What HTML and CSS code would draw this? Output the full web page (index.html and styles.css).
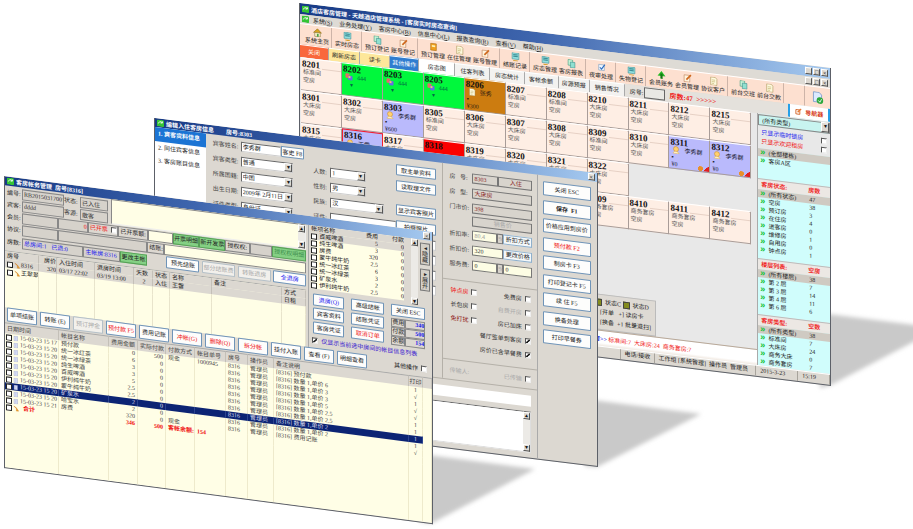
FILE: index.html
```html
<!DOCTYPE html>
<html lang="zh-CN">
<head>
<meta charset="utf-8">
<title>天越酒店管理系统</title>
<link rel="stylesheet" href="styles.css">
</head>
<body>
<svg class="defs" aria-hidden="true">
  <symbol id="i-home" viewBox="0 0 16 16"><path d="M1 8 8 1l7 7z" fill="#d9a520" stroke="#8a6a10"/><path d="M3 8h10v7H3z" fill="#f6efc8" stroke="#8a7a40"/><path d="M7 10h3v5H7z" fill="#49a349"/></symbol>
  <symbol id="i-screen" viewBox="0 0 16 16"><rect x="2" y="1" width="12" height="11" fill="#8fdede" stroke="#3f8f96"/><path d="M4 4h8M4 7h8" stroke="#3f8f96" stroke-width="2"/><path d="M4 15h8" stroke="#d8a030" stroke-width="2"/></symbol>
  <symbol id="i-doc" viewBox="0 0 16 16"><path d="M3 1h8l3 3v11H3z" fill="#fffbe0" stroke="#a89050"/><path d="M5 6h6M5 9h6M5 12h4" stroke="#b8a860"/></symbol>
  <symbol id="i-edit" viewBox="0 0 16 16"><path d="M2 3h10v12H2z" fill="#fff4df" stroke="#b87a50"/><path d="m6 11 8-9" stroke="#cf6a20" stroke-width="3"/></symbol>
  <symbol id="i-book" viewBox="0 0 16 16"><path d="M3 2h10v12H3z" fill="#f0a020" stroke="#a8640c"/><path d="M5 5h6v3H5z" fill="#fff0b0"/></symbol>
  <symbol id="i-pages" viewBox="0 0 16 16"><path d="M2 1h8v10H2z" fill="#c8f4d8" stroke="#3a9a7a"/><path d="M6 5h8v10H6z" fill="#8fe0d0" stroke="#3a8a8a"/></symbol>
  <symbol id="i-tree" viewBox="0 0 16 16"><path d="M8 1 15 10H1z" fill="#22b822"/><path d="M8 6v9" stroke="#147814" stroke-width="4"/></symbol>
  <symbol id="i-check" viewBox="0 0 16 16"><path d="M3 3h10v10H3z" fill="#eef6ff" stroke="#7898b8"/><path d="m5 8 3 3 6-9" fill="none" stroke="#2c6cc0" stroke-width="2"/></symbol>
  <symbol id="i-refresh" viewBox="0 0 16 16"><path d="M3 1h7l3 3v9H3z" fill="#dceaff" stroke="#7798c8"/><circle cx="11" cy="11" r="4" fill="#2ca83c"/><path d="m9 11 2 2 2-4" fill="none" stroke="#fff"/></symbol>
  <symbol id="i-person" viewBox="0 0 16 16"><circle cx="8" cy="6" r="5" fill="#ffd070" stroke="#c88a20"/><path d="M2 15c1-6 11-6 12 0z" fill="#fff0c0" stroke="#d8a850"/></symbol>
  <symbol id="i-group" viewBox="0 0 16 16"><rect x="1" y="1" width="8" height="9" rx="2" fill="#e86868"/><rect x="6" y="5" width="9" height="9" rx="2" fill="#6868e8"/><rect x="7" y="6" width="4" height="4" fill="#f4c860"/></symbol>
  <symbol id="i-app" viewBox="0 0 16 16"><rect width="16" height="16" rx="2" fill="#35c435"/><path d="M3 9c2-6 8-6 9-2M12 3v4H8" fill="none" stroke="#fff" stroke-width="2"/></symbol>
  <symbol id="i-pen" viewBox="0 0 16 16"><path d="M2 4h9v10H2z" fill="#fff" stroke="#d06020" stroke-width="2"/><path d="m6 10 8-9" stroke="#e87830" stroke-width="3"/></symbol>
  <symbol id="i-file" viewBox="0 0 12 16"><path d="M1 2h9v12H1z" fill="#eef2ff" stroke="#7a88c0"/><path d="M3 5h5M3 8h5M3 11h5" stroke="#8a98d0"/></symbol>
  <symbol id="i-key" viewBox="0 0 16 16"><path d="M2 2 9 8v7l6-1-6-8z" fill="#f0a830" stroke="#c86a10"/></symbol>
</svg>
<main class="desktop">
  <svg class="shadows" viewBox="0 0 913 529" aria-hidden="true">
    <defs><filter id="soft" x="-10%" y="-10%" width="120%" height="120%"><feGaussianBlur stdDeviation="2"/></filter></defs>
    <g fill="#c9c9c9" filter="url(#soft)">
      <path d="M820 313 940 328 831 385 820 388z"/>
      <path d="M585 399 701 414 597 467 585 466z"/>
      <path d="M420 454 535 469 432 523 420 522z"/>
    </g>
  </svg>

  <section class="win win-rooms">
    <header class="title"><svg class="ic"><use href="#i-app"/></svg><h2>酒店客房管理 - 天越酒店管理系统 - [客房实时房态查询]</h2><span class="caps"><button aria-label="最小化">_</button><button aria-label="最大化">□</button><button aria-label="关闭">×</button></span></header>
    <nav class="menu"><svg class="ic"><use href="#i-app"/></svg><a href="#">系统(<u>S</u>)</a><a href="#">业务处理(<u>Y</u>)</a><a href="#">客房中心(<u>B</u>)</a><a href="#">信息中心(<u>L</u>)</a><a href="#">报表查询(<u>R</u>)</a><a href="#">查看(<u>V</u>)</a><a href="#">帮助(<u>H</u>)</a><span class="caps"><button aria-label="最小化窗口">_</button><button aria-label="还原窗口">□</button><button aria-label="关闭窗口">×</button></span></nav>
    <div class="tools">
      <div class="grp"><button><svg class="ic"><use href="#i-home"/></svg>系统主页</button></div>
      <div class="grp"><button><svg class="ic"><use href="#i-screen"/></svg>实时房态</button></div>
      <div class="grp"><button><svg class="ic"><use href="#i-pages"/></svg>预订登记</button><button><svg class="ic"><use href="#i-edit"/></svg>账号登记</button></div>
      <div class="grp"><button><svg class="ic"><use href="#i-book"/></svg>预订管理</button><button><svg class="ic"><use href="#i-doc"/></svg>在住管理</button><button><svg class="ic"><use href="#i-edit"/></svg>账号管理</button></div>
      <div class="grp"><button><svg class="ic"><use href="#i-screen"/></svg>结账记录</button></div>
      <div class="grp"><button><svg class="ic"><use href="#i-screen"/></svg>房态管理</button><button><svg class="ic"><use href="#i-pages"/></svg>客房报表</button></div>
      <div class="grp"><button><svg class="ic"><use href="#i-check"/></svg>夜审处理</button></div>
      <div class="grp"><button><svg class="ic"><use href="#i-screen"/></svg>失物登记</button></div>
      <div class="grp"><button><svg class="ic"><use href="#i-tree"/></svg>会员账务</button><button><svg class="ic"><use href="#i-edit"/></svg>会员管理</button><button><svg class="ic"><use href="#i-doc"/></svg>协议客户</button></div>
      <div class="grp"><button><svg class="ic"><use href="#i-pages"/></svg>前台交班</button><button><svg class="ic"><use href="#i-doc"/></svg>前台交款</button></div>
      <button class="big" aria-label="刷新"><svg class="ic"><use href="#i-refresh"/></svg></button>
    </div>
    <div class="tabs">
      <button class="t-close">关闭</button><button class="t-yel">刷新房态</button><button class="t-yel">读卡</button><button class="t-blue">其他操作</button><button class="t-on">房态图</button><button>住客列表</button><button>房态统计</button><button>客帐余额</button><button>房源预报</button><button>销售情况</button>
      <div class="find"><label for="roomno">房号:</label><input id="roomno"><strong>房数:47&nbsp; &gt;&gt;&gt;&gt;&gt;</strong></div>
      <h3 class="guide"><svg class="ic"><use href="#i-pen"/></svg>导航器</h3>
    </div>
    <div class="rooms-body">
      <div class="rooms-main">
        <div class="cards">
          <article><b>8201</b><p>标准间</p><p>空房</p></article>
          <article class="green"><b>8202</b><p><svg class="ic"><use href="#i-group"/></svg>444</p><p class="mark">▾</p></article>
          <article class="green"><b>8203</b><p><svg class="ic"><use href="#i-group"/></svg>444</p><p class="mark">▾</p></article>
          <article class="green"><b>8205</b><p><svg class="ic"><use href="#i-group"/></svg>444</p><p class="mark">▾</p></article>
          <article class="brown"><b>8206</b><p><svg class="ic"><use href="#i-doc"/></svg>张秀</p><p>▪</p><p>¥300</p></article>
          <article><b>8207</b><p>标准间</p><p>空房</p></article>
          <article><b>8208</b><p>标准间</p><p>空房</p></article>
          <article><b>8210</b><p>大床房</p><p>空房</p></article>
          <article><b>8211</b><p>大床房</p><p>空房</p></article>
          <article><b>8212</b><p>大床房</p><p>空房</p></article>
          <article><b>8215</b><p>大床房</p><p>空房</p></article>
          <article><b>8301</b><p>大床房</p><p>空房</p></article>
          <article><b>8302</b><p>大床房</p><p>空房</p></article>
          <article class="lilac"><b>8303</b><p><svg class="ic"><use href="#i-person"/></svg>李秀群</p><p>▪</p><p>¥600</p></article>
          <article><b>8305</b><p>标准间</p><p>空房</p></article>
          <article><b>8306</b><p>大床房</p><p>空房</p></article>
          <article><b>8307</b><p>大床房</p><p>空房</p></article>
          <article><b>8308</b><p>大床房</p><p>空房</p></article>
          <article><b>8309</b><p>标准间</p><p>空房</p></article>
          <article><b>8310</b><p>大床房</p><p>空房</p></article>
          <article class="lilac due"><b>8311</b><p><svg class="ic"><use href="#i-person"/></svg>李秀群</p><p>▪</p><p>¥0</p></article>
          <article class="lilac due"><b>8312</b><p><svg class="ic"><use href="#i-person"/></svg>李秀群</p><p>▪</p><p>¥0</p></article>
          <article><b>8315</b><p>大床房</p></article>
          <article class="lilac picked"><b>8316</b><p><svg class="ic"><use href="#i-person"/></svg>王雷</p></article>
          <article><b>8317</b><p>大床房</p></article>
          <article class="red"><b>8318</b></article>
          <article><b>8319</b><p>大床房</p></article>
          <article><b>8320</b><p>大床房</p></article>
          <article><b>8321</b><p>大床房</p></article>
          <article><b>8322</b><p>大床房</p><p>空房</p></article>
          <article class="none"></article><article class="none"></article><article class="none"></article>
          <article></article><article></article><article></article><article></article><article></article><article></article><article></article>
          <article><b>8409</b><p>商务套房</p><p>空房</p></article>
          <article><b>8410</b><p>商务套房</p><p>空房</p></article>
          <article><b>8411</b><p>商务套房</p><p>空房</p></article>
          <article><b>8412</b><p>商务套房</p><p>空房</p></article>
        </div>
        <div class="legend">
          <p><i></i>状态C <i></i>状态D</p>
          <p>[开单 &nbsp; +] 读房卡</p>
          <p>[换备 &nbsp;+1 批量退扫]</p>
        </div>
        <p class="ticker"><b>客房空房&gt;&gt;</b> 标准间:7&nbsp; 大床房:24&nbsp; 商务套房:7</p>
      </div>
      <aside class="side">
        <span class="drop"><select aria-label="类型"><option>(所有类型)</option></select></span>
        <div class="opts">
          <label class="blue">只显示临时锁房<input type="checkbox"></label>
          <label class="redt">只显示欢迎租房<input type="checkbox"></label>
        </div>
        <table class="areas"><tr class="on"><td>(全部楼栋)</td></tr><tr><td>客房A区</td></tr></table>
        <h4><span>客房状态:</span><span>房数</span></h4>
        <table><tr class="on"><td>(所有状态)</td><td>47</td></tr><tr><td>空房</td><td>38</td></tr><tr><td>预订房</td><td>3</td></tr><tr><td>在住房</td><td>4</td></tr><tr><td>进客房</td><td>0</td></tr><tr><td>维修房</td><td>1</td></tr><tr><td>自用房</td><td>0</td></tr><tr><td>钟点房</td><td>1</td></tr></table>
        <h4><span>楼层列表:</span><span>空房</span></h4>
        <table><tr class="on"><td>(所有楼层)</td><td>38</td></tr><tr><td>第 2 层</td><td>7</td></tr><tr><td>第 3 层</td><td>14</td></tr><tr><td>第 4 层</td><td>11</td></tr><tr><td>第 6 层</td><td>6</td></tr></table>
        <h4><span>客房类型:</span><span>空数</span></h4>
        <table><tr class="on"><td>(所有类型)</td><td>38</td></tr><tr><td>标准间</td><td>7</td></tr><tr><td>大床房</td><td>24</td></tr><tr><td>商务大床</td><td>0</td></tr><tr><td>商务套房</td><td>7</td></tr></table>
      </aside>
    </div>
    <footer class="status"><span></span><span>电话/接收</span><span>工作组 [系统管理]&nbsp; 操作员&nbsp; 管理员</span><span>2015-3-23</span><span>15:19</span></footer>
  </section>

  <section class="win win-guest">
    <header class="title"><svg class="ic"><use href="#i-app"/></svg><h2>编辑入住客房信息 &nbsp; &nbsp; &nbsp; &nbsp;房号:8303</h2><span class="caps"><button aria-label="关闭">×</button></span></header>
    <div class="guest-body">
      <nav class="steps"><a class="on" href="#">1. 宾客资料信息</a><a href="#">2. 同住宾客信息</a><a href="#">3. 客房账目信息</a></nav>
      <div class="guest-main">
        <form class="guest-form">
          <div class="col-a">
            <div class="f"><label for="gn">宾客姓名:</label><span class="pair"><input id="gn" value="李秀群"><button type="button">客史 F8</button></span></div>
            <div class="f"><label for="gt">宾客类型:</label><span class="drop"><select id="gt"><option>普通</option></select></span></div>
            <div class="f"><label for="gc">所属国籍:</label><span class="drop"><select id="gc"><option>中国</option></select></span></div>
            <div class="f"><label for="gb">出生日期:</label><span class="drop"><select id="gb"><option>2009年 2月11日</option></select></span></div>
            <div class="f"><label for="gi">证件类型:</label><span class="drop"><select id="gi"><option>身份证</option></select></span></div>
          </div>
          <div class="col-b">
            <div class="f short"><label for="gp">人数:</label><span class="spin"><input id="gp" value="1"></span></div>
            <div class="f short"><label for="gs">性别:</label><span class="drop"><select id="gs"><option>男</option></select></span></div>
            <div class="f"><label for="gm">民族:</label><span class="drop"><select id="gm"><option>汉</option></select></span></div>
            <div class="f long"><label for="ga">证件:</label><input id="ga"></div>
          </div>
          <div class="col-c">
            <button type="button">取主单资料</button><button type="button">读取理文件</button><button type="button" class="gap">显示宾客照片</button><button type="button">拍摄照片</button>
            <input aria-label="电话"><input aria-label="邮编"><input aria-label="车牌"><input aria-label="单位">
          </div>
        </form>
        <form class="price">
          <div class="p"><label for="pr">房&nbsp;&nbsp; 号:</label><span class="pair"><input id="pr" value="8303"><output>入住</output></span></div>
          <div class="p"><label for="pt">房&nbsp;&nbsp; 型:</label><input id="pt" value="大床房"></div>
          <div class="p"><label for="pm">门市价:</label><input id="pm" value="398"></div>
          <div class="p low"><span></span><output class="dim">销售价</output></div>
          <div class="p c"><label for="pd">折扣率:</label><span class="trio"><input id="pd" class="pale" value="80.4"><i>%</i><button type="button">折扣方式</button></span></div>
          <div class="p c"><label for="pe">折扣价:</label><span class="pair2"><input id="pe" value="320"><button type="button">更改价格</button></span></div>
          <div class="p c"><label for="pf">服务费:</label><span class="trio"><input id="pf" value="0"><i>%</i><input aria-label="服务费金额" value="0"></span></div>
          <div class="checks">
            <label class="redt">钟点房<input type="checkbox"></label><label>免费房<input type="checkbox"></label>
            <label>长包房<input type="checkbox"></label><label class="off">自费开房<input type="checkbox"></label>
            <label class="maroon">免打扰<input type="checkbox"></label><label>房已加床<input type="checkbox"></label>
            <label class="wide">餐厅签单到客房<input type="checkbox" checked></label>
            <label class="wide">房价已含早餐费<input type="checkbox" checked></label>
          </div>
          <div class="sent"><span>传输人:</span><label>已传输<input type="checkbox"></label></div>
        </form>
        <div class="notes"><input aria-label="摘要"><div class="memo"><textarea aria-label="备注"></textarea><span class="bar"><i>▴</i><i>▾</i></span></div></div>
      </div>
      <div class="cmds"><button>关闭 ESC</button><button class="strong">保存&nbsp; F1</button><button>价格应用到房价</button><button class="redt">预付款 F2</button><button>制房卡 F3</button><button>打印登记卡 F5</button><button>续 住 F5</button><button>换备处理</button><button>打印早餐券</button></div>
    </div>
  </section>

  <section class="win win-bill">
    <header class="title"><svg class="ic"><use href="#i-app"/></svg><h2>客房帐务管理&nbsp; 房号[8316]</h2><span class="caps"><button aria-label="关闭">×</button></span></header>
    <div class="bill-top">
      <div class="bill-left">
        <div class="head">
          <div class="ids">
            <label for="b1">编号:</label><input id="b1" value="RB20150317001"><label for="b2">状态:</label><input id="b2" value="已入住">
            <label for="b3">宾客:</label><input id="b3" value="dddd"><label for="b4">客源:</label><input id="b4" value="散客">
          </div>
          <div class="pane"><span class="bar"><i>▴</i><i>▾</i></span></div>
        </div>
        <div class="line l1"><label for="b5">会员:</label><input id="b5"><output class="redt r">0</output><label class="box redt">已开票 <input type="checkbox"></label><span class="box">已开票额:</span><input class="cream" aria-label="已开票额"><button class="gb">开票明细</button><button class="gb">新开发票</button><span class="box">授权权:</span><input aria-label="授权权"><button class="gb dim">授权权明细</button></div>
        <div class="line l2"><label for="b6">协议:</label><input id="b6"><input aria-label="协议名称"><label class="box" for="b7">结账:</label><input id="b7" class="cream"></div>
        <div class="line l3"><span>房数:</span><output class="blue">总房间:1&nbsp; &nbsp;已退:0</output><output class="blue">主帐房:8316</output><button class="gb">更改主帐</button><span class="settle"><button class="btn">预先结账</button><button class="btn off">部分结账费</button><button class="btn off">转账退房</button><button class="btn blue">全退房</button></span></div>
        <table class="stay">
          <colgroup><col class="c1"><col class="c2"><col class="c3"><col class="c4"><col class="c5"><col class="c6"><col class="c7"><col class="c8"><col></colgroup>
          <tr class="h"><th>房号</th><th class="r">房价</th><th>入住时间</th><th>退房时间</th><th>天数</th><th>状态</th><th>名称</th><th>备注</th><th>方式</th></tr>
          <tr class="h"><td><input type="checkbox" aria-label="8316"><svg class="ic"><use href="#i-key"/></svg>8316</td><td class="r">320</td><td>03/17 22:02</td><td>03/19 13:00</td><td class="m">2</td><td>入住</td><td>王雷</td><td></td><td>日租</td></tr>
          <tr><td><input type="checkbox" aria-label="王翠翠"><svg class="ic"><use href="#i-key"/></svg>王翠翠</td><td></td><td></td><td></td><td></td><td></td><td></td><td></td><td></td></tr>
          <tr class="fill"><td></td><td></td><td></td><td></td><td></td><td></td><td></td><td></td><td></td></tr>
        </table>
      </div>
      <div class="bill-right">
        <div class="items">
          <table><tr class="h"><th>帐项名称</th><th class="r">费用</th><th class="r">付款</th></tr>
            <tr class="h"><td><label><input type="checkbox">百威啤酒</label></td><td>5</td><td>0</td></tr><tr><td><label><input type="checkbox">纯生啤酒</label></td><td>3</td><td>0</td></tr><tr><td><label><input type="checkbox">房费</label></td><td>320</td><td>0</td></tr><tr><td><label><input type="checkbox">蒙牛纯牛奶</label></td><td>2.5</td><td>0</td></tr><tr><td><label><input type="checkbox">统一冰红茶</label></td><td>6</td><td>0</td></tr><tr><td><label><input type="checkbox">统一冰绿茶</label></td><td>3</td><td>0</td></tr><tr><td><label><input type="checkbox">矿泉水</label></td><td>2</td><td>0</td></tr><tr><td><label><input type="checkbox">伊利纯牛奶</label></td><td>2.5</td><td>0</td></tr>
          </table>
          <span class="bar"><i>▴</i><i>▾</i></span>
          <div class="flip"><button>◂<br>隐<br>藏</button><button>▸<br>展<br>开</button></div>
        </div>
        <div class="acts">
          <button class="btn blue">退房(Q)</button><button class="btn">高级结帐</button><button class="btn">关闭 ESC</button>
          <button class="btn">宾客资料</button><button class="btn">结账凭证</button>
          <button class="btn">客房凭证</button><button class="btn redt">取消订单</button>
          <dl><dt>费用</dt><dd>340</dd><dt>付款</dt><dd>500</dd><dt>余额</dt><dd>154</dd></dl>
        </div>
        <label class="only"><input type="checkbox" checked>仅显示当前选中房间的帐目信息列表</label>
      </div>
    </div>
    <div class="btnrow"><button class="btn">单项结账</button><button class="btn">转账 (E)</button><button class="btn off">预订押金</button><button class="btn redt">预付款 F5</button><button class="btn">费用记账</button><button class="btn redt">冲帐(G)</button><button class="btn redt">删除(Q)</button><button class="btn redt">拆分帐</button><button class="btn">挂付入账</button><button class="btn">查看 (F)</button><button class="btn">明细查看</button><label>其他操作<input type="checkbox"></label></div>
    <table class="ledger">
      <colgroup><col class="d1"><col class="d2"><col class="d3"><col class="d4"><col class="d5"><col class="d6"><col class="d7"><col class="d8"><col class="d9"><col class="d10"><col></colgroup>
      <tr class="h"><th>日期时间</th><th>帐目名称</th><th class="r">费用金额</th><th class="r">实际付款</th><th>付款方式</th><th>帐目单号</th><th>房号</th><th>操作员</th><th>备注说明</th><th class="m">打印</th><th></th></tr>
      <tr><td><input type="checkbox" aria-label="1"><svg class="ic"><use href="#i-file"/></svg>15-03-23 15 17</td><td>预付款</td><td>0</td><td>500</td><td>现金</td><td>1000945</td><td>8316</td><td>管理员</td><td>[8316] 预付款</td><td>1</td><td></td></tr>
      <tr><td><input type="checkbox" aria-label="2"><svg class="ic"><use href="#i-file"/></svg>15-03-23 15 20</td><td>统一冰红茶</td><td>6</td><td>0</td><td></td><td></td><td>8316</td><td>管理员</td><td>[8316] 数量 1,单价 6</td><td>√</td><td></td></tr>
      <tr><td><input type="checkbox" aria-label="3"><svg class="ic"><use href="#i-file"/></svg>15-03-23 15 20</td><td>统一冰绿茶</td><td>3</td><td>0</td><td></td><td></td><td>8316</td><td>管理员</td><td>[8316] 数量 1,单价 3</td><td>1</td><td></td></tr>
      <tr><td><input type="checkbox" aria-label="4"><svg class="ic"><use href="#i-file"/></svg>15-03-23 15 20</td><td>纯生啤酒</td><td>3</td><td>0</td><td></td><td></td><td>8316</td><td>管理员</td><td>[8316] 数量 1,单价 3</td><td>√</td><td></td></tr>
      <tr><td><input type="checkbox" aria-label="5"><svg class="ic"><use href="#i-file"/></svg>15-03-23 15 20</td><td>百威啤酒</td><td>5</td><td>0</td><td></td><td></td><td>8316</td><td>管理员</td><td>[8316] 数量 1,单价 5</td><td>√</td><td></td></tr>
      <tr><td><input type="checkbox" aria-label="6"><svg class="ic"><use href="#i-file"/></svg>15-03-23 15 20</td><td>伊利纯牛奶</td><td>2.5</td><td>0</td><td></td><td></td><td>8316</td><td>管理员</td><td>[8316] 数量 1,单价 2.5</td><td>1</td><td></td></tr>
      <tr><td><input type="checkbox" aria-label="7"><svg class="ic"><use href="#i-file"/></svg>15-03-23 15 20</td><td>蒙牛纯牛奶</td><td>2.5</td><td>0</td><td></td><td></td><td>8316</td><td>管理员</td><td>[8316] 数量 1,单价 2.5</td><td>1</td><td></td></tr>
      <tr class="sel"><td><input type="checkbox" aria-label="8"><svg class="ic"><use href="#i-file"/></svg>15-03-23 15 20</td><td>矿泉水</td><td>2</td><td>0</td><td></td><td></td><td>8316</td><td>管理员</td><td>[8316] 数量 1,单价 2</td><td>1</td><td></td></tr>
      <tr><td><input type="checkbox" aria-label="9"><svg class="ic"><use href="#i-file"/></svg>15-03-23 15 20</td><td>哈宝水</td><td>2</td><td>0</td><td></td><td></td><td>8316</td><td>管理员</td><td>[8316] 数量 1,单价 2</td><td>1</td><td></td></tr>
      <tr><td><input type="checkbox" aria-label="10"><svg class="ic"><use href="#i-file"/></svg>15-03-23 15 21</td><td>房费</td><td>320</td><td>0</td><td>现金</td><td></td><td>8316</td><td>管理员</td><td>[8316] 费用记账</td><td>√</td><td></td></tr>
      <tr class="sum"><td><input type="checkbox" aria-label="合计"><svg class="ic"><use href="#i-key"/></svg>&nbsp; 合计</td><td></td><td>346</td><td>500</td><td>客帐余额:</td><td>154</td><td></td><td></td><td></td><td></td><td></td></tr>
      <tr class="fill"><td></td><td></td><td></td><td></td><td></td><td></td><td></td><td></td><td></td><td></td><td></td></tr>
    </table>
  </section>
</main>
</body>
</html>
```
FILE: styles.css
```css
* { box-sizing: border-box; }
body { margin: 0; background: #fff; color: #222; font: 6px/8px "Liberation Serif", "Noto Sans CJK SC", sans-serif; }
h2, h3, h4, p, dl, dd { margin: 0; font-size: inherit; }
button, input, select, textarea { font: inherit; color: inherit; margin: 0; padding: 0; min-width: 0; border-radius: 0; }
a { color: inherit; text-decoration: none; }
table { border-spacing: 0; border-collapse: separate; width: 100%; }
td, th { padding: 0; font-weight: 400; text-align: left; white-space: nowrap; overflow: hidden; }
i { font-style: normal; }
label, button, p, h2, h4, output, span { white-space: nowrap; }
.defs { position: absolute; width: 0; height: 0; }
.ic { width: 7px; height: 7px; flex: none; }
.blue { color: #1a1af0; }
.redt { color: #f01010; }
.maroon { color: #8c1010; }
.off { color: #aaa; }
.r { text-align: right; }
.m { text-align: center; }

.desktop { position: relative; min-height: 100vh; overflow: hidden; }
.shadows { position: absolute; left: 0; top: 0; width: 100%; }

.win { position: absolute; display: flex; flex-direction: column; background: #dcd8d1; border: 1px solid #5c6068; border-top: 0; transform-origin: 0 0; overflow: hidden; }
.win-rooms { left: 299px; top: 3px; width: 58.3%; transform: skewY(6.97deg); }
.win-guest { left: 154px; top: 118px; width: 48.6%; min-height: 294px; transform: skewY(7.07deg); }
.win-bill { left: 4px; top: 176px; width: 47%; min-height: 292px; transform: skewY(7.46deg); }

.title { display: flex; align-items: center; gap: 2px; height: 9px; padding: 0 2px; color: #fff; background: linear-gradient(90deg, #173a86, #3f66ae 45%, #a6caf0); }
.title h2 { flex: 1; font-weight: 700; }
.win-rooms .title { height: 11px; }
.caps { display: flex; gap: 1px; margin-left: auto; }
.caps button { width: 7px; height: 7px; border: 1px solid; border-color: #fff #555 #555 #fff; background: #dcd8d1; color: #111; line-height: 4px; overflow: hidden; }

input[type="checkbox"] { appearance: none; flex: none; width: 6px; height: 6px; border: 1px solid; border-color: #555 #eee #eee #555; background: #fff; margin-left: 3px; }
input[type="checkbox"]:checked { background: linear-gradient(135deg, #fff 30%, #222 45%, #222 60%, #fff 70%); }
.drop, .spin { position: relative; display: block; }
.drop::after, .spin::after { content: "▾"; position: absolute; right: 1px; top: 1px; bottom: 1px; width: 6px; line-height: 7px; text-align: center; color: #111; background: #dcd8d1; border: 1px solid; border-color: #fff #555 #555 #fff; overflow: hidden; }
select { appearance: none; width: 100%; display: block; }
.bar { display: flex; flex-direction: column; justify-content: space-between; width: 7px; background: #eceae6; }
.bar i { height: 7px; line-height: 5px; text-align: center; color: #111; background: #dcd8d1; border: 1px solid; border-color: #fff #555 #555 #fff; }

.menu { display: flex; align-items: center; gap: 7px; height: 9px; padding: 0 2px; background: #dedbd5; }
.menu .ic { margin-right: -3px; }
.tools { display: flex; height: 21px; padding-left: 2px; background: #fde0d0; border-top: 1px solid #fff; }
.grp { display: flex; padding: 0 1px 0 2px; border-right: 1px solid #cdb4a8; }
.tools button { display: flex; flex-direction: column; align-items: center; justify-content: center; width: 26px; border: 0; background: none; line-height: 8px; }
.tools .ic { width: 9px; height: 9px; }
.tools .big { margin-left: auto; border-left: 1px solid #cdb4a8; }
.tools .big .ic { width: 13px; height: 13px; }
.tabs { display: grid; grid-template-columns: 29fr 31fr 30fr 29fr 36fr 35fr 34fr 34fr 31fr 35fr 163fr 42fr; height: 13px; background: #e4e1dc; }
.tabs button { border: 0; border-right: 1px solid #aaa; background: #f3f2f0; border-top: 1px solid #fff; overflow: hidden; }
.tabs .t-close { background: #f9683c; color: #ffe; }
.tabs .t-yel { background: #fde79a; }
.tabs .t-blue { background: #2f7dd0; color: #fff; }
.tabs .t-on { background: #fff; }
.find { display: flex; align-items: center; gap: 1px; padding-left: 5px; }
.find input { width: 21px; height: 11px; border: 1px solid #666; background: #e8e8e4; }
.find strong { color: #f01818; margin-left: 3px; font-size: 7px; }
.guide { display: flex; align-items: center; justify-content: center; gap: 3px; color: #d8401c; background: #fff; border: solid #25a0e8; border-width: 0 2px; }

.rooms-body { display: grid; grid-template-columns: 459fr 72fr; height: 252px; }
.rooms-main { display: flex; flex-direction: column; background: #e8e8e8; border-right: 1px solid #aaa; }
.cards { display: grid; grid-template-columns: repeat(11, 1fr); grid-auto-rows: 33px; padding: 0 6px 0 1px; }
.cards article { position: relative; padding: 1px 0 0 1px; background: #feeee4; border: solid; border-width: 1px 1px 1px 0; border-color: #fff #a89c98 #a89c98 #fff; color: #555; overflow: hidden; }
.cards b { display: block; font-size: 9px; line-height: 8px; color: #111; background: linear-gradient(90deg, transparent 20px, #e6d0c4 20px) 0 7px / 100% 1px no-repeat; }
.cards p { display: flex; align-items: center; gap: 4px; line-height: 8px; padding-left: 1px; }
.cards p .ic { width: 8px; height: 8px; margin-left: 1px; }
.cards .mark { padding-left: 7px; }
.cards .green { background: #00f83c; color: #064; }
.cards .brown { background: #cc7c10; color: #321; }
.cards .lilac { background: #babafc; color: #223; }
.cards .red { background: #fa0000; }
.cards .green b, .cards .brown b, .cards .lilac b, .cards .red b { background: none; }
.cards .lilac p, .cards .brown p { line-height: 7px; }
.cards .picked { border: 1px solid #f02030; }
.cards .none { background: none; border-color: transparent; }
.due::after { content: ""; position: absolute; right: 0; bottom: 0; width: 12px; height: 6px; background: linear-gradient(135deg, transparent 50%, #e02020 51%) right / 6px 6px no-repeat, radial-gradient(circle, #e8902c 55%, transparent 60%) left / 7px 5px no-repeat; }
.legend { margin: auto auto 0 225px; width: 131px; height: 36px; padding: 2px 4px 2px 74px; background: #dedad4; border: 1px solid #bbb; line-height: 10px; }
.legend i { display: inline-block; width: 7px; height: 7px; background: #848c1c; border: 1px solid #444; vertical-align: middle; margin-right: 3px; }
.legend p:first-child i:first-child { margin-left: -5px; }
.ticker { height: 16px; padding: 4px 0 0 276px; background: linear-gradient(#fff 12px, #f0e8e0); color: #f02020; border-top: 1px solid #b8a898; }
.ticker b { color: #2020e0; }
.side { display: flex; flex-direction: column; background: #d0fdfc; }
.side select { height: 11px; background: #c8f4f0; border: 1px solid #888; padding-left: 3px; }
.side .drop { height: 12px; background: #e4e4e4; padding-top: 1px; }
.opts { background: #e8e8e8; height: 23px; padding: 3px 3px 0 3px; line-height: 9px; }
.opts label { display: flex; justify-content: space-between; align-items: center; }
.side td { height: 8px; line-height: 8px; padding-left: 2px; }
.side td:first-child::before { content: "»"; color: #10c030; font: 700 9px/0 "Liberation Sans"; margin-right: 3px; }
.side td:last-child:not(:first-child) { width: 24px; padding-left: 3px; }
.side .on td { background: #cfcac2; }
.side .areas { margin-bottom: 9px; }
.side h4 { display: flex; justify-content: space-between; height: 11px; line-height: 11px; padding: 0 10px 0 3px; background: #ece8e4; color: #f02828; border-top: 1px solid #bbb; margin-top: auto; }
.side table { flex: none; }
.status { display: grid; grid-template-columns: 321fr 34fr 102fr 42fr 32fr; height: 11px; line-height: 9px; border-top: 1px solid #fff; }
.status span { border-right: 1px solid #a8a49c; padding-left: 4px; overflow: hidden; }

.guest-body { flex: 1; display: grid; grid-template-columns: 51fr 333fr 59fr; }
.steps { background: #fff; }
.steps a { display: block; height: 13px; line-height: 13px; padding-left: 3px; }
.steps .on { background: #1b74d4; color: #fff; height: 14px; font-weight: 700; }
.guest-main { display: grid; grid-template: 215px 1fr / 238fr 95fr; border-right: 1px solid #aaa; }
.guest-form { display: grid; grid-template-columns: 100fr 91fr 47fr; }
.f { display: grid; grid-template-columns: 28px 1fr; height: 15px; align-items: center; }
.col-a { padding: 1px 12px 0 7px; }
.col-a .pair { display: grid; grid-template-columns: 40px 23px; margin-right: -12px; align-items: center; }
.guest-form input:not([type]), .guest-form select { height: 10px; width: 100%; border: 1px solid; border-color: #666 #ccc #ccc #666; background: #fff; padding-left: 1px; }
.col-a label, .col-b label { color: #444; }
.col-b { padding: 16px 12px 0 8px; }
.col-b .f { grid-template-columns: 17px 1fr; }
.col-b .short { padding-right: 18px; }
.col-b .long { margin-right: -12px; }
.col-a button, .col-c button, .cmds button, .btn { border: 1px solid #6f94b8; background: #fdfdfc; border-radius: 1px; overflow: hidden; }
.btn.off { border-color: #b4c0c8; background: #f2f0ec; }
.guest-form button { height: 11px; }
.col-c { display: flex; flex-direction: column; gap: 5px; padding: 7px 6px 0 0; }
.col-c .gap { margin-top: 8px; }
.col-c button { flex: none; }
.price { border-left: 1px solid #b4b0a8; padding: 4px 5px 0 6px; color: #444; }
.p { display: grid; grid-template-columns: 23px 1fr; height: 15px; align-items: center; }
.p.low { height: 12px; }
.p input, .p output, .p i, .p button { height: 10px; width: 100%; border: 1px solid #777; background: #d8d4cd; color: #822; padding-left: 1px; line-height: 8px; display: block; }
.p output { text-align: center; }
.p .dim { color: #aaa; }
.pair2 { display: grid; grid-template-columns: 31px 1fr; }
.price .pair { display: grid; grid-template-columns: 26px 1fr; }
.trio { display: grid; grid-template-columns: 25px 6px 1fr; }
.p.c input { background: #fdfde4; color: #333; }
.p.c .pale { color: #999; }
.p.c i { color: #999; padding: 0; }
.p.c button { background: #f4f8fa; border-color: #8fb0cc; color: #222; padding: 0; }
.checks { display: grid; grid-template-columns: 28px 1fr; grid-auto-rows: 14px; align-items: center; margin: 9px -5px 0 -6px; padding: 3px 6px; border-top: 1px solid #b4b0a8; }
.checks label, .sent label { display: flex; align-items: center; justify-content: flex-end; color: #333; }
.checks .redt { color: #f01010; }
.checks .maroon { color: #8c1010; }
.checks .off, .sent, .sent label { color: #aaa; }
.checks .wide { grid-column: span 2; }
.sent { display: flex; justify-content: space-between; align-items: center; height: 20px; margin: 3px -5px 0 -6px; padding: 0 6px; border-top: 1px solid #b4b0a8; }
.notes { grid-column: span 2; border-top: 1px solid #b4b0a8; padding: 6px 6px 5px; display: flex; flex-direction: column; gap: 5px; }
.notes input { width: 100%; height: 11px; border: 0; background: #fff; }
.memo { flex: 1; display: flex; border: 1px solid; border-color: #666 #ddd #ddd #666; background: #fff; }
.memo textarea { flex: 1; border: 0; resize: none; height: 100%; }
.cmds { display: grid; grid-auto-rows: 14px; align-content: space-between; height: 162px; margin-top: 6px; padding: 0 6px 0 5px; }
.cmds .strong { font-weight: 700; }

.bill-top { display: grid; grid-template-columns: 305fr 123fr; height: 122px; }
.bill-left { display: flex; flex-direction: column; padding-right: 2px; border-right: 1px solid #aaa; min-width: 0; }
.head { display: flex; height: 25px; }
.ids { display: grid; grid-template-columns: 15px 42px 16px 28px; grid-auto-rows: 12px; align-items: center; padding: 1px 4px 0 2px; width: 106px; color: #333; }
.pane { flex: 1; display: flex; justify-content: flex-end; background: #fffee6; border: 1px solid; border-color: #888 #eee #eee #888; }
.ids input, .line input:not([type]), .line output { width: 100%; height: 11px; border: 1px solid #888; background: #d6d2cb; padding-left: 1px; line-height: 9px; overflow: hidden; }
.line { display: grid; height: 12px; padding-left: 2px; align-items: center; }
.line .box { display: flex; align-items: center; height: 11px; border: 1px solid #888; padding-left: 1px; overflow: hidden; }
.line .cream.cream { background: #fffee6; }
.l1 { grid-template-columns: 15px 36fr 29fr 30fr 30fr 24fr 26fr 26fr 24fr 22fr 34fr; }
.l2 { grid-template-columns: 15px 36fr 90fr 17fr 143fr; }
.l3 { grid-template-columns: 15px 62fr 37fr 28fr 161fr; height: 14px; }
.settle { display: flex; justify-content: space-between; padding-left: 19px; }
.settle .btn { width: 33px; height: 12px; }
.gb { height: 11px; border: 1px solid #57a057; background: #84d084; overflow: hidden; }
.gb.dim { color: #3f8f4f; }
.stay { flex: 1; margin-top: 2px; table-layout: fixed; background: #fffee6; border-top: 1px solid #aaa; }
.stay td, .stay th { height: 8px; border-right: 1px solid #e8e4cc; padding-left: 2px; }
.stay input[type="checkbox"], .ledger input[type="checkbox"], .items input[type="checkbox"] { margin: 0 1px 0 0; border-color: #222; vertical-align: middle; }
.stay .ic, .ledger .ic { width: 6px; height: 6px; vertical-align: middle; margin-right: 1px; }
.stay .h td, .stay .h th, .items .h td, .items .h th, .ledger .h th { background: #dcd8d1; border-color: #c4c0b8; }
.stay .fill td { height: auto; }
.c1 { width: 34px; } .c2 { width: 18px; } .c3 { width: 38px; } .c4 { width: 39px; } .c5 { width: 19px; } .c6 { width: 17px; } .c7 { width: 42px; } .c8 { width: 70px; }

.bill-right { display: flex; flex-direction: column; }
.items { display: flex; height: 66px; padding-left: 2px; overflow: hidden; }
.items table { flex: 1; align-self: flex-start; background: #fffee6; }
.items td, .items th { height: 7px; line-height: 7px; }
.items td + td { width: 26px; text-align: right; }
.items label { display: flex; align-items: center; gap: 1px; }
.items .bar { margin-left: 7px; }
.flip { display: flex; flex-direction: column; gap: 4px; padding: 3px 2px; }
.flip button { width: 10px; height: 22px; line-height: 6px; border: 1px solid #777; background: #d4d0c8; }
.acts { display: grid; grid-template-columns: 31px 33px 34px; grid-auto-rows: 12px; gap: 2px 7px; padding: 2px 4px 0 4px; }
.acts dl { grid-area: 2 / 3 / 4 / 4; display: grid; grid-template-columns: 14px 1fr; grid-auto-rows: 9px; }
.acts dt, .acts dd { border: 1px solid #888; line-height: 7px; }
.acts dd { color: #1818e8; font-weight: 700; text-align: right; }
.only { display: flex; align-items: center; gap: 3px; color: #3a20d0; margin-top: 3px; }
.btnrow { display: flex; gap: 3px; height: 15px; padding: 0 0 1px 2px; align-items: center; }
.btnrow .btn { flex: 0 1 30px; height: 14px; padding: 0; }
.btnrow label { display: flex; align-items: center; margin: 0 5px 0 auto; }
.ledger { flex: 1; table-layout: fixed; background: #fffee6; color: #444; }
.ledger td, .ledger th { height: 7px; line-height: 7px; border-right: 1px solid #eeeacc; padding: 0 2px; }
.ledger td:first-child { padding: 0 0 0 1px; }
.ledger .h th { height: 11px; border-top: 1px solid #aaa; }
.ledger th.m { padding: 0; }
.ledger td:nth-child(3), .ledger td:nth-child(4) { text-align: right; }
.ledger td:nth-child(10) { text-align: center; }
.ledger .sel td:not(:last-child) { background: #0c2474; color: #dde; border-color: #2c4490; }
.ledger .sum td { color: #f01010; font-weight: 700; overflow: visible; }
.ledger .fill td { height: auto; }
.d1 { width: 54px; } .d2 { width: 50px; } .d3 { width: 29px; } .d4 { width: 28px; } .d5 { width: 29px; } .d6 { width: 31px; } .d7 { width: 22px; } .d8 { width: 26px; } .d9 { width: 135px; } .d10 { width: 14px; }
```
